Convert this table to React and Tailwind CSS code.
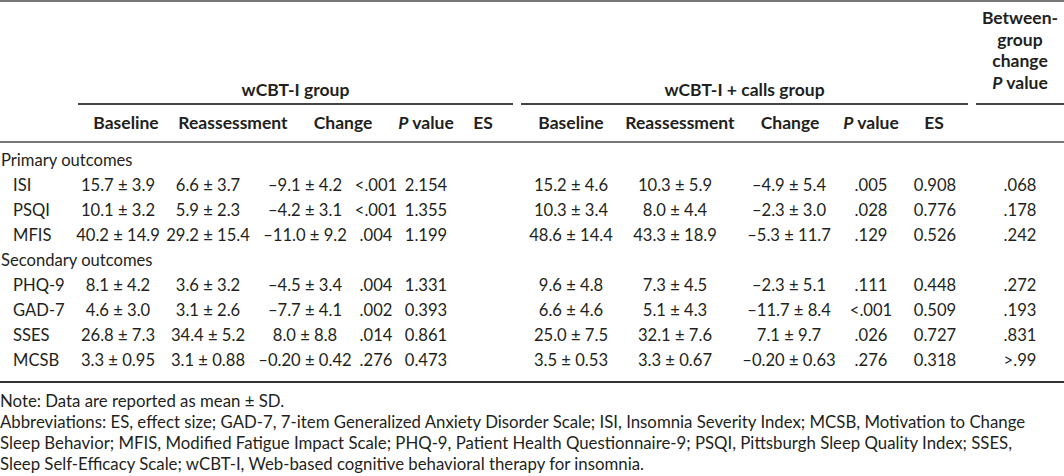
import React from 'react';

const groups = [
  {
    title: 'Primary outcomes',
    rows: [
      ['ISI', '15.7 ± 3.9', '6.6 ± 3.7', '–9.1 ± 4.2', '<.001', '2.154', '15.2 ± 4.6', '10.3 ± 5.9', '–4.9 ± 5.4', '.005', '0.908', '.068'],
      ['PSQI', '10.1 ± 3.2', '5.9 ± 2.3', '–4.2 ± 3.1', '<.001', '1.355', '10.3 ± 3.4', '8.0 ± 4.4', '–2.3 ± 3.0', '.028', '0.776', '.178'],
      ['MFIS', '40.2 ± 14.9', '29.2 ± 15.4', '–11.0 ± 9.2', '.004', '1.199', '48.6 ± 14.4', '43.3 ± 18.9', '–5.3 ± 11.7', '.129', '0.526', '.242'],
    ],
  },
  {
    title: 'Secondary outcomes',
    rows: [
      ['PHQ-9', '8.1 ± 4.2', '3.6 ± 3.2', '–4.5 ± 3.4', '.004', '1.331', '9.6 ± 4.8', '7.3 ± 4.5', '–2.3 ± 5.1', '.111', '0.448', '.272'],
      ['GAD-7', '4.6 ± 3.0', '3.1 ± 2.6', '–7.7 ± 4.1', '.002', '0.393', '6.6 ± 4.6', '5.1 ± 4.3', '–11.7 ± 8.4', '<.001', '0.509', '.193'],
      ['SSES', '26.8 ± 7.3', '34.4 ± 5.2', '8.0 ± 8.8', '.014', '0.861', '25.0 ± 7.5', '32.1 ± 7.6', '7.1 ± 9.7', '.026', '0.727', '.831'],
      ['MCSB', '3.3 ± 0.95', '3.1 ± 0.88', '–0.20 ± 0.42', '.276', '0.473', '3.5 ± 0.53', '3.3 ± 0.67', '–0.20 ± 0.63', '.276', '0.318', '>.99'],
    ],
  },
];

const Cell = ({ w, children }) => (
  <div className={`${w} shrink-0 flex justify-center`}>{children}</div>
);

const DataRow = ({ r }) => (
  <div className="flex h-[25px] items-center whitespace-nowrap">
    <div className="w-[78px] shrink-0 pl-[13px]">{r[0]}</div>
    <Cell w="w-[80px]">{r[1]}</Cell>
    <Cell w="w-[100px]">{r[2]}</Cell>
    <Cell w="w-[94px]">{r[3]}</Cell>
    <Cell w="w-[48px]">{r[4]}</Cell>
    <Cell w="w-[52px]">{r[5]}</Cell>
    <div className="w-[78px] shrink-0" />
    <Cell w="w-[82px]">{r[6]}</Cell>
    <Cell w="w-[126px]">{r[7]}</Cell>
    <Cell w="w-[102px]">{r[8]}</Cell>
    <Cell w="w-[62px]">{r[9]}</Cell>
    <Cell w="w-[66px]">{r[10]}</Cell>
    <div className="w-[8px] shrink-0" />
    <Cell w="w-[88px]">{r[11]}</Cell>
  </div>
);

const PValue = () => (
  <span>
    <i>P</i> value
  </span>
);

export default function App() {
  return (
    <div className="w-[1064px] h-[476px] overflow-hidden bg-white text-[#231f20] text-[16.6px] font-['Lato',sans-serif]">
      {/* top rule */}
      <div className="h-[2px] bg-[#777]" />

      {/* group titles */}
      <div className="flex h-[101px] items-end whitespace-nowrap text-[17.5px] font-bold">
        <div className="w-[78px] shrink-0" />
        <div className="w-[435px] shrink-0 mb-[3px] text-center leading-[21px]">wCBT-I group</div>
        <div className="w-[8px] shrink-0" />
        <div className="w-[447px] shrink-0 mb-[3px] text-center leading-[21px]">wCBT-I + calls group</div>
        <div className="w-[8px] shrink-0" />
        <div className="w-[88px] shrink-0 mb-[10px] text-center leading-[21.5px]">
          Between-
          <br />
          group
          <br />
          change
          <br />
          <PValue />
        </div>
      </div>

      {/* group underlines */}
      <div className="flex h-[2px]">
        <div className="w-[78px] shrink-0" />
        <div className="w-[435px] shrink-0 bg-[#444]" />
        <div className="w-[8px] shrink-0" />
        <div className="w-[447px] shrink-0 bg-[#444]" />
        <div className="w-[8px] shrink-0" />
        <div className="w-[88px] shrink-0 bg-[#444]" />
      </div>

      {/* column headers */}
      <div className="flex h-[36px] items-center whitespace-nowrap text-[17.5px] font-bold">
        <div className="w-[78px] shrink-0" />
        <Cell w="w-[96px]">Baseline</Cell>
        <Cell w="w-[118px]">Reassessment</Cell>
        <Cell w="w-[102px]">Change</Cell>
        <Cell w="w-[64px]"><PValue /></Cell>
        <Cell w="w-[50px]">ES</Cell>
        <div className="w-[22px] shrink-0" />
        <Cell w="w-[82px]">Baseline</Cell>
        <Cell w="w-[136px]">Reassessment</Cell>
        <Cell w="w-[84px]">Change</Cell>
        <Cell w="w-[78px]"><PValue /></Cell>
        <Cell w="w-[48px]">ES</Cell>
      </div>
      <div className="h-[2px] bg-[#777]" />

      {/* body */}
      <div className="pt-[5px]">
        {groups.map((g) => (
          <div key={g.title}>
            <div className="flex h-[25px] items-center pl-[1px]">{g.title}</div>
            {g.rows.map((r) => (
              <DataRow key={r[0]} r={r} />
            ))}
          </div>
        ))}
      </div>
      <div className="mt-[8px] h-[2px] bg-[#333]" />

      {/* footnotes */}
      <div className="pt-[7px] text-[16.8px] leading-[21px] whitespace-nowrap">
        <div>Note: Data are reported as mean ± SD.</div>
        <div>Abbreviations: ES, effect size; GAD-7, 7-item Generalized Anxiety Disorder Scale; ISI, Insomnia Severity Index; MCSB, Motivation to Change</div>
        <div>Sleep Behavior; MFIS, Modified Fatigue Impact Scale; PHQ-9, Patient Health Questionnaire-9; PSQI, Pittsburgh Sleep Quality Index; SSES,</div>
        <div>Sleep Self-Efficacy Scale; wCBT-I, Web-based cognitive behavioral therapy for insomnia.</div>
      </div>
    </div>
  );
}
